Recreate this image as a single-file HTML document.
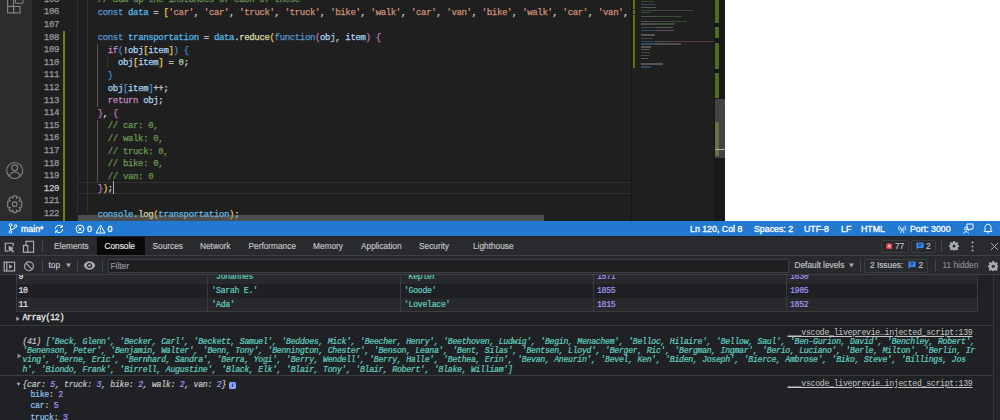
<!DOCTYPE html>
<html><head><meta charset="utf-8">
<style>
*{margin:0;padding:0;box-sizing:border-box}
html,body{width:1000px;height:420px;overflow:hidden;background:#202124;font-family:"Liberation Sans",sans-serif}
.abs{position:absolute}
#act{position:absolute;left:0;top:0;width:32px;height:220.8px;background:#2c2c2c}
#editor{position:absolute;left:32px;top:0;width:693px;height:220.8px;background:#1f1f1f;overflow:hidden}
#code{position:absolute;left:0;top:0;width:1000px;height:221px}
.cl{position:absolute;left:45.5px;height:12.6px;line-height:12.6px;font-family:"Liberation Mono",monospace;font-size:9px;letter-spacing:-0.35px;-webkit-text-stroke:0.25px;color:#d4d4d4;white-space:pre;width:554px;overflow:hidden}
.ln{position:absolute;left:0;width:27px;text-align:right;height:12.6px;line-height:12.6px;font-family:"Liberation Mono",monospace;font-size:9px;letter-spacing:-0.35px;-webkit-text-stroke:0.25px;color:#9a9a9a}
.ln.act{color:#c6c6c6}
.ig{position:absolute;width:1px;background:#303030}
.ig.act{background:#555555}
.mm{position:absolute;height:1.5px;opacity:.42}
#status{position:absolute;left:0;top:220.8px;width:1000px;height:15.7px;background:#2279d2;color:#fff;font-size:8.8px;line-height:15.5px}
#status span{position:absolute;top:1.2px;white-space:pre;-webkit-text-stroke:0.3px #fff}
#dev{position:absolute;left:0;top:236.5px;width:1000px;height:183.5px;background:#202124;overflow:hidden}
.tb{position:absolute;top:0;height:18.5px;line-height:18.5px;font-size:8.3px;color:#c4c7c5;white-space:pre;-webkit-text-stroke:0.15px}
.sep{position:absolute;width:1px;background:#45474b}
.mono{font-family:"Liberation Mono",monospace}
.tr{position:absolute;left:15.5px;width:962px;height:14px;}
.td{position:absolute;top:0.6px;height:14px;line-height:14px;font-family:"Liberation Mono",monospace;font-size:8.2px;letter-spacing:-0.29px;white-space:pre;-webkit-text-stroke:0.2px}
.str{color:#62cfc0}
.num{color:#a596f2}
.cm{position:absolute;left:0;font-family:"Liberation Mono",monospace;font-size:8.2px;letter-spacing:-0.29px;white-space:pre;color:#e3e3e3;-webkit-text-stroke:0.2px}
.link{position:absolute;left:787.5px;font-family:"Liberation Mono",monospace;font-size:8.2px;letter-spacing:-0.29px;white-space:pre;color:#c4c7c5;text-decoration:underline}
</style></head><body>
<div class="abs" style="left:700px;top:0;width:300px;height:221px;background:#fff"></div>
<div id="act">
  <svg class="abs" style="left:0;top:0" width="32" height="221" viewBox="0 0 32 221">
    <g fill="none" stroke="#858585" stroke-width="1.1">
      <rect x="7.6" y="-0.5" width="6" height="6.9"/>
      <rect x="7.6" y="6.4" width="6" height="6.5"/>
      <rect x="13.6" y="6.4" width="6.5" height="6.5"/>
      <rect x="15.5" y="-4" width="7.5" height="7.2" rx="1"/>
      <circle cx="14.7" cy="170.5" r="8"/>
      <circle cx="14.7" cy="167.8" r="2.9"/>
      <path d="M9.2 176.3 C10.5 172.8 12.5 172 14.7 172 C16.9 172 18.9 172.8 20.2 176.3"/>
      <circle cx="14.7" cy="204.2" r="2.3"/>
      <path d="M13.3 195.8 L16.1 195.8 L16.6 198.2 L18.6 196.9 L20.6 198.9 L19.3 200.9 L21.7 201.4 L21.7 204.2 L21.7 207 L19.3 207.5 L20.6 209.5 L18.6 211.5 L16.6 210.2 L16.1 212.6 L13.3 212.6 L12.8 210.2 L10.8 211.5 L8.8 209.5 L10.1 207.5 L7.7 207 L7.7 201.4 L10.1 200.9 L8.8 198.9 L10.8 196.9 L12.8 198.2 Z"/>
    </g>
  </svg>
</div>
<div id="editor">
  <div id="code">
<div class="ig" style="left:44.50px;top:-10px;height:223px"></div>
<div class="ig" style="left:54.60px;top:-10px;height:223px"></div>
<div class="ig act" style="left:64.70px;top:44.10px;height:63.00px"></div>
<div class="ig act" style="left:64.70px;top:119.70px;height:63.00px"></div>
<div class="ig" style="left:74.80px;top:56.70px;height:12.60px"></div>
    <!-- current line box -->
    <div class="abs" style="left:46px;top:182px;width:553px;height:11.5px;border-top:1px solid #303030;border-bottom:1px solid #303030"></div>
<div class="cl" style="top:-5.70px">    <span style="color:#6a9955">// Sum up the instances of each of these</span></div>
<div class="ln" style="top:-6.30px">105</div>
<div class="cl" style="top:6.90px">    <span style="color:#5a96cc">const</span> <span style="color:#56b8e8">data</span><span style="color:#d4d4d4"> = </span><span style="color:#e8c840">[</span><span style="color:#ce9178">&#x27;car&#x27;</span><span style="color:#d4d4d4">, </span><span style="color:#ce9178">&#x27;car&#x27;</span><span style="color:#d4d4d4">, </span><span style="color:#ce9178">&#x27;truck&#x27;</span><span style="color:#d4d4d4">, </span><span style="color:#ce9178">&#x27;truck&#x27;</span><span style="color:#d4d4d4">, </span><span style="color:#ce9178">&#x27;bike&#x27;</span><span style="color:#d4d4d4">, </span><span style="color:#ce9178">&#x27;walk&#x27;</span><span style="color:#d4d4d4">, </span><span style="color:#ce9178">&#x27;car&#x27;</span><span style="color:#d4d4d4">, </span><span style="color:#ce9178">&#x27;van&#x27;</span><span style="color:#d4d4d4">, </span><span style="color:#ce9178">&#x27;bike&#x27;</span><span style="color:#d4d4d4">, </span><span style="color:#ce9178">&#x27;walk&#x27;</span><span style="color:#d4d4d4">, </span><span style="color:#ce9178">&#x27;car&#x27;</span><span style="color:#d4d4d4">, </span><span style="color:#ce9178">&#x27;van&#x27;</span><span style="color:#d4d4d4">, </span><span style="color:#ce9178">&#x27;bike&#x27;</span><span style="color:#d4d4d4">, </span><span style="color:#ce9178">&#x27;walk&#x27;</span></div>
<div class="ln" style="top:6.30px">106</div>
<div class="cl" style="top:19.50px"></div>
<div class="ln" style="top:18.90px">107</div>
<div class="cl" style="top:32.10px">    <span style="color:#5a96cc">const</span> <span style="color:#56b8e8">transportation</span><span style="color:#d4d4d4"> = </span><span style="color:#56b8e8">data</span><span style="color:#d4d4d4">.</span><span style="color:#dcdcaa">reduce</span><span style="color:#e8c840">(</span><span style="color:#5a96cc">function</span><span style="color:#c874c4">(</span><span style="color:#a8d4f0">obj</span><span style="color:#d4d4d4">, </span><span style="color:#a8d4f0">item</span><span style="color:#c874c4">)</span> <span style="color:#c874c4">{</span></div>
<div class="ln" style="top:31.50px">108</div>
<div class="cl" style="top:44.70px">      <span style="color:#c586c0">if</span><span style="color:#3d8fd8">(</span><span style="color:#d4d4d4">!</span><span style="color:#a8d4f0">obj</span><span style="color:#e8c840">[</span><span style="color:#a8d4f0">item</span><span style="color:#e8c840">]</span><span style="color:#3d8fd8">)</span> <span style="color:#3d8fd8">{</span></div>
<div class="ln" style="top:44.10px">109</div>
<div class="cl" style="top:57.30px">        <span style="color:#a8d4f0">obj</span><span style="color:#e8c840">[</span><span style="color:#a8d4f0">item</span><span style="color:#e8c840">]</span><span style="color:#d4d4d4"> = </span><span style="color:#b5cea8">0</span><span style="color:#d4d4d4">;</span></div>
<div class="ln" style="top:56.70px">110</div>
<div class="cl" style="top:69.90px">      <span style="color:#3d8fd8">}</span></div>
<div class="ln" style="top:69.30px">111</div>
<div class="cl" style="top:82.50px">      <span style="color:#a8d4f0">obj</span><span style="color:#3d8fd8">[</span><span style="color:#a8d4f0">item</span><span style="color:#3d8fd8">]</span><span style="color:#d4d4d4">++;</span></div>
<div class="ln" style="top:81.90px">112</div>
<div class="cl" style="top:95.10px">      <span style="color:#c586c0">return</span> <span style="color:#a8d4f0">obj</span><span style="color:#d4d4d4">;</span></div>
<div class="ln" style="top:94.50px">113</div>
<div class="cl" style="top:107.70px">    <span style="color:#c874c4">}</span><span style="color:#d4d4d4">, </span><span style="color:#c874c4">{</span></div>
<div class="ln" style="top:107.10px">114</div>
<div class="cl" style="top:120.30px">      <span style="color:#6a9955">// car: 0,</span></div>
<div class="ln" style="top:119.70px">115</div>
<div class="cl" style="top:132.90px">      <span style="color:#6a9955">// walk: 0,</span></div>
<div class="ln" style="top:132.30px">116</div>
<div class="cl" style="top:145.50px">      <span style="color:#6a9955">// truck: 0,</span></div>
<div class="ln" style="top:144.90px">117</div>
<div class="cl" style="top:158.10px">      <span style="color:#6a9955">// bike: 0,</span></div>
<div class="ln" style="top:157.50px">118</div>
<div class="cl" style="top:170.70px">      <span style="color:#6a9955">// van: 0</span></div>
<div class="ln" style="top:170.10px">119</div>
<div class="cl" style="top:183.30px">    <span style="color:#c874c4">}</span><span style="color:#e8c840">)</span><span style="color:#d4d4d4">;</span></div>
<div class="ln act" style="top:182.70px">120</div>
<div class="cl" style="top:195.90px"></div>
<div class="ln" style="top:195.30px">121</div>
<div class="cl" style="top:208.50px">    <span style="color:#56b8e8">console</span><span style="color:#d4d4d4">.</span><span style="color:#dcdcaa">log</span><span style="color:#e8c840">(</span><span style="color:#56b8e8">transportation</span><span style="color:#e8c840">)</span><span style="color:#d4d4d4">;</span></div>
<div class="ln" style="top:207.90px">122</div>
    <div class="abs" style="left:81px;top:181.3px;width:1px;height:13px;background:#aeafad"></div>
    <!-- git gutter bar -->
    <div class="abs" style="left:31px;top:31px;width:2.4px;height:191px;background:#5e8a1c"></div>
    <!-- horizontal scrollbar -->
    <div class="abs" style="left:45.5px;top:215px;width:466.5px;height:5.8px;background:rgba(140,140,140,0.42)"></div>
  </div>
  <!-- minimap -->
  <div class="abs" style="left:599px;top:0;width:94px;height:221px;background:#1f1f1f;border-left:1px solid #151515"></div>
  <div class="abs" style="left:601px;top:0;width:2.2px;height:8.5px;background:#587c0c"></div><div class="abs" style="left:601px;top:9.8px;width:2.2px;height:4px;background:#587c0c"></div><div class="abs" style="left:601px;top:15px;width:2.2px;height:53px;background:#587c0c"></div>
  <div class="abs" style="left:682px;top:0;width:11px;height:221px;background:#181818"></div>
  <div class="abs" style="left:683px;top:0;width:3.6px;height:23px;background:#4f6e1c"></div>
  <div class="abs" style="left:683px;top:27px;width:3.6px;height:11px;background:#4f6e1c"></div>
  <div class="abs" style="left:683px;top:43px;width:3.6px;height:25.5px;background:#4f6e1c"></div>
  <div class="abs" style="left:683px;top:73px;width:3.6px;height:25px;background:#4f6e1c"></div>
  <div class="abs" style="left:683px;top:122px;width:3.6px;height:34px;background:#4f6e1c"></div>
  <div class="abs" style="left:682.5px;top:99px;width:10px;height:59px;background:rgba(121,121,121,0.45)"></div>
  <div class="abs" style="left:682.5px;top:149px;width:10px;height:1.2px;background:#b0b0b0"></div>
</div>
<div id="mmwrap" class="abs" style="left:0;top:0;width:715px;height:221px;overflow:hidden">
<div class="mm" style="left:640.50px;top:0.80px;width:13.00px;background:#5d8a50"></div>
<div class="mm" style="left:640.50px;top:3.80px;width:15.00px;background:#4a7fb8"></div>
<div class="mm" style="left:640.50px;top:6.60px;width:15.00px;background:#a0a0a0"></div>
<div class="mm" style="left:640.50px;top:9.80px;width:52.00px;background:#5d8a50"></div>
<div class="mm" style="left:640.50px;top:11.90px;width:10.00px;background:#5d8a50"></div>
<div class="mm" style="left:640.50px;top:15.60px;width:15.00px;background:#909090"></div>
<div class="mm" style="left:655.50px;top:15.60px;width:26.00px;background:#5d8a50"></div>
<div class="mm" style="left:640.50px;top:20.60px;width:12.00px;background:#909090"></div>
<div class="mm" style="left:652.50px;top:20.60px;width:34.00px;background:#5d8a50"></div>
<div class="mm" style="left:640.50px;top:23.00px;width:14.00px;background:#909090"></div>
<div class="mm" style="left:654.50px;top:23.00px;width:20.00px;background:#5d8a50"></div>
<div class="mm" style="left:640.50px;top:26.50px;width:14.00px;background:#4a7fb8"></div>
<div class="mm" style="left:654.50px;top:26.50px;width:18.00px;background:#a0a0a0"></div>
<div class="mm" style="left:640.50px;top:29.60px;width:15.00px;background:#4a7fb8"></div>
<div class="mm" style="left:655.50px;top:29.60px;width:18.00px;background:#a0a0a0"></div>
<div class="mm" style="left:640.50px;top:34.40px;width:14.00px;background:#a0a0a0"></div>
<div class="mm" style="left:640.50px;top:37.60px;width:12.00px;background:#5d8a50"></div>
<div class="mm" style="left:640.50px;top:40.60px;width:14.00px;background:#4a7fb8"></div>
<div class="mm" style="left:654.50px;top:40.60px;width:16.00px;background:#909090"></div>
<div class="mm" style="left:670.50px;top:40.60px;width:46.00px;background:#9a7060"></div>
<div class="mm" style="left:640.50px;top:43.40px;width:14.00px;background:#4a7fb8"></div>
<div class="mm" style="left:654.50px;top:43.40px;width:26.00px;background:#909090"></div>
<div class="mm" style="left:640.50px;top:46.20px;width:10.00px;background:#a0a0a0"></div>
<div class="mm" style="left:640.50px;top:48.80px;width:9.00px;background:#a0a0a0"></div>
<div class="mm" style="left:640.50px;top:51.80px;width:9.00px;background:#5d8a50"></div>
<div class="mm" style="left:640.50px;top:54.80px;width:9.00px;background:#5d8a50"></div>
<div class="mm" style="left:640.50px;top:57.80px;width:7.00px;background:#a0a0a0"></div>
<div class="mm" style="left:640.50px;top:63.20px;width:22.00px;background:#a0a0a0"></div>
<div class="mm" style="left:640.50px;top:66.20px;width:10.00px;background:#4a7fb8"></div>
</div>

<div id="status">
  <svg class="abs" style="left:8px;top:2.5px" width="10" height="11" viewBox="0 0 10 11"><g fill="none" stroke="#fff" stroke-width="1"><circle cx="2.5" cy="2" r="1.3"/><circle cx="2.5" cy="9" r="1.3"/><circle cx="7.5" cy="3" r="1.3"/><path d="M2.5 3.3 V7.7 M7.5 4.3 C7.5 6.5 2.5 5.5 2.5 7.7"/></g></svg>
  <span style="left:21px">main*</span>
  <svg class="abs" style="left:54px;top:3px" width="10" height="10" viewBox="0 0 10 10"><g fill="none" stroke="#fff" stroke-width="1"><path d="M1.3 5 A3.7 3.7 0 0 1 8 2.8"/><path d="M8.7 5 A3.7 3.7 0 0 1 2 7.2"/><path d="M8.3 1 V3.2 H6"/><path d="M1.7 9 V6.8 H4"/></g></svg>
  <svg class="abs" style="left:75px;top:3px" width="10" height="10" viewBox="0 0 10 10"><g fill="none" stroke="#fff" stroke-width="1"><circle cx="5" cy="5" r="4"/><path d="M3.3 3.3 L6.7 6.7 M6.7 3.3 L3.3 6.7"/></g></svg>
  <span style="left:87px">0</span>
  <svg class="abs" style="left:95px;top:3px" width="11" height="10" viewBox="0 0 11 10"><g fill="none" stroke="#fff" stroke-width="1"><path d="M5.5 1 L10 9 H1 Z"/><path d="M5.5 4 V6.3 M5.5 7.2 V8"/></g></svg>
  <span style="left:107.5px">0</span>
  <span style="left:690px">Ln 120, Col 8</span>
  <span style="left:754px">Spaces: 2</span>
  <span style="left:804px">UTF-8</span>
  <span style="left:841px">LF</span>
  <span style="left:861px">HTML</span>
  <svg class="abs" style="left:897.5px;top:3px" width="8.5" height="10" viewBox="0 0 10 10"><g fill="none" stroke="#fff" stroke-width="1"><path d="M2 1 C0.5 2.5 0.5 5.5 2 7 M8 1 C9.5 2.5 9.5 5.5 8 7 M3.5 2.5 C2.8 3.3 2.8 4.7 3.5 5.5 M6.5 2.5 C7.2 3.3 7.2 4.7 6.5 5.5"/><path d="M5 4 L3 10 M5 4 L7 10"/></g></svg>
  <span style="left:910px">Port: 3000</span>
  <svg class="abs" style="left:963px;top:2.5px" width="11" height="11" viewBox="0 0 11 11"><g fill="none" stroke="#fff" stroke-width="1"><path d="M4 1 H10 V6 H7 L5.5 7.5 V6 H4 Z"/><circle cx="3" cy="5.5" r="1.5"/><path d="M0.5 10.5 C0.8 8.2 5.2 8.2 5.5 10.5"/></g></svg>
  <svg class="abs" style="left:983px;top:2.5px" width="10" height="11" viewBox="0 0 10 11"><g fill="none" stroke="#fff" stroke-width="1"><path d="M2 7.5 V4.5 C2 2.5 3.3 1.2 5 1.2 C6.7 1.2 8 2.5 8 4.5 V7.5 L9 8.5 H1 Z"/><path d="M4 9.5 C4.3 10.3 5.7 10.3 6 9.5"/></g></svg>
</div>

<div id="dev">
  <!-- tab bar -->
  <div class="abs" style="left:0;top:0;width:1000px;height:18.5px;background:#292a2d"></div>
  <div class="abs" style="left:0;top:18px;width:1000px;height:1px;background:#3d3f42"></div>
  <div class="abs" style="left:0;top:19px;width:1000px;height:18.5px;background:#292a2d"></div>
  <svg class="abs" style="left:0;top:0" width="45" height="37" viewBox="0 0 45 37">
    <g fill="none" stroke="#aeb1b4" stroke-width="1.15">
      <path d="M5.3 14.2 V6.2 H13.2 V9.2"/>
      <path d="M5.3 14.2 H8.3" />
      <path d="M8.8 9.3 L9.3 14.6 L10.6 12.9 L12.9 15.3 L13.8 14.4 L11.5 12 L13.3 11 Z" fill="#aeb1b4" stroke-width="0.6"/>
      <rect x="26" y="4.3" width="7.6" height="10.9"/>
      <rect x="23.4" y="8.5" width="4.4" height="6.7" fill="#292a2d"/>
      <rect x="4.2" y="25.2" width="10.4" height="8.8"/>
      <path d="M6.8 25.2 V34"/>
      <path d="M9.2 27.2 L12.4 29.6 L9.2 32 Z" fill="#aeb1b4" stroke="none"/>
      <circle cx="29" cy="29.3" r="4.4"/>
      <path d="M25.9 26.2 L32.1 32.4"/>
    </g>
  </svg>
  <div class="sep" style="left:41.5px;top:3.5px;height:12px"></div>
  <div class="abs" style="left:97px;top:0;width:48px;height:18.5px;background:#0a0a0a"></div>
  <div class="tb" style="left:54px">Elements</div>
  <div class="tb" style="left:104.5px;color:#e8e8e8">Console</div>
  <div class="tb" style="left:152.5px">Sources</div>
  <div class="tb" style="left:200px">Network</div>
  <div class="tb" style="left:248.5px">Performance</div>
  <div class="tb" style="left:313px">Memory</div>
  <div class="tb" style="left:361px">Application</div>
  <div class="tb" style="left:419px">Security</div>
  <div class="tb" style="left:473px">Lighthouse</div>
  <!-- right badges -->
  <div class="abs" style="left:881px;top:3px;width:28px;height:13px;border:1px solid #3c3d40;border-radius:2px"></div>
  <svg class="abs" style="left:885.5px;top:6.3px" width="6.5" height="6.5" viewBox="0 0 6.5 6.5"><circle cx="3.25" cy="3.25" r="3.2" fill="#e5484d"/><path d="M2 2 L4.5 4.5 M4.5 2 L2 4.5" stroke="#fff" stroke-width="0.8"/></svg>
  <div class="tb" style="left:895px">77</div>
  <div class="abs" style="left:911px;top:3px;width:24.5px;height:13px;border:1px solid #3c3d40;border-radius:2px"></div>
  <svg class="abs" style="left:916px;top:5px" width="8" height="9" viewBox="0 0 8 9"><path d="M0.5 0.5 H7.5 V6 H2 L0.5 8 Z" fill="#3f8cf3"/><path d="M2 2.2 H6 M2 4 H5" stroke="#0b2a60" stroke-width="0.8"/></svg>
  <div class="tb" style="left:926px">2</div>
  <div class="sep" style="left:941px;top:3.5px;height:12px"></div>
  <svg class="abs" style="left:948.5px;top:4.5px" width="10" height="10" viewBox="0 0 12 12"><g fill="#a8abae"><path d="M5 0.5 H7 L7.3 2 L8.5 2.6 L9.8 1.7 L11.2 3.1 L10.3 4.4 L10.8 5.5 L12 5.8 V7.8 L10.8 8.1 L10.3 9.2 L11.2 10.5 L9.8 11.9 L8.5 11 L7.3 11.6 L7 12 H5 L4.7 11.6 L3.5 11 L2.2 11.9 L0.8 10.5 L1.7 9.2 L1.2 8.1 L0 7.8 V5.8 L1.2 5.5 L1.7 4.4 L0.8 3.1 L2.2 1.7 L3.5 2.6 L4.7 2 Z" transform="translate(0,-0.6)"/></g><circle cx="6" cy="6" r="1.8" fill="#292a2d"/></svg>
  <svg class="abs" style="left:970px;top:4px" width="5" height="11" viewBox="0 0 5 11"><g fill="#a8abae"><circle cx="2.5" cy="1.5" r="1"/><circle cx="2.5" cy="5.5" r="1"/><circle cx="2.5" cy="9.5" r="1"/></g></svg>
  <svg class="abs" style="left:989.5px;top:5.5px" width="9" height="9" viewBox="0 0 9 9"><path d="M1 1 L8 8 M8 1 L1 8" stroke="#a8abae" stroke-width="1"/></svg>

  <!-- toolbar -->
  <div class="abs" style="left:0;top:37.5px;width:1000px;height:1px;background:#3d3f42"></div>
  <div class="sep" style="left:41.5px;top:23px;height:11px"></div>
  <div class="tb" style="left:48.5px;top:20.5px;height:17.5px;line-height:17.5px">top</div>
  <svg class="abs" style="left:65.5px;top:26px" width="5" height="5" viewBox="0 0 5 5"><path d="M0 0.5 H5 L2.5 4.5 Z" fill="#a8abae"/></svg>
  <div class="sep" style="left:76.5px;top:23px;height:11px"></div>
  <svg class="abs" style="left:83px;top:24px" width="13" height="9" viewBox="0 0 13 9"><path d="M0.6 4.5 C2.5 1 4.5 0.3 6.5 0.3 C8.5 0.3 10.5 1 12.4 4.5 C10.5 8 8.5 8.7 6.5 8.7 C4.5 8.7 2.5 8 0.6 4.5 Z" fill="#a8abae"/><circle cx="6.5" cy="4.5" r="2.6" fill="#292a2d"/><circle cx="6.5" cy="4.5" r="1.2" fill="#a8abae"/></svg>
  <div class="sep" style="left:102px;top:23px;height:11px"></div>
  <div class="abs" style="left:107.5px;top:22px;width:681px;height:14px;background:#1f1f22;border:1px solid #3c3d40;border-radius:1px"></div>
  <div class="tb" style="left:110.5px;top:21.2px;height:17px;line-height:17px;color:#9aa0a6">Filter</div>
  <div class="tb" style="left:794.5px;top:20.5px;height:17.5px;line-height:17.5px">Default levels</div>
  <svg class="abs" style="left:849px;top:26px" width="5" height="5" viewBox="0 0 5 5"><path d="M0 0.5 H5 L2.5 4.5 Z" fill="#a8abae"/></svg>
  <div class="sep" style="left:860px;top:23px;height:11px"></div>
  <div class="abs" style="left:863.5px;top:22px;width:64.5px;height:14px;border:1px solid #3c3d40;border-radius:2px"></div>
  <div class="tb" style="left:870px;top:20.5px;height:17.5px;line-height:17.5px">2 Issues:</div>
  <svg class="abs" style="left:908px;top:24.5px" width="8" height="9" viewBox="0 0 8 9"><path d="M0.5 0.5 H7.5 V6 H2 L0.5 8 Z" fill="#3f8cf3"/><path d="M2 2.2 H6 M2 4 H5" stroke="#0b2a60" stroke-width="0.8"/></svg>
  <div class="tb" style="left:918.5px;top:20.5px;height:17.5px;line-height:17.5px">2</div>
  <div class="sep" style="left:935px;top:23px;height:11px"></div>
  <div class="tb" style="left:942.5px;top:20.5px;height:17.5px;line-height:17.5px;color:#8a8d91">11 hidden</div>
  <svg class="abs" style="left:987.5px;top:24px" width="10.5" height="10.5" viewBox="0 0 12 12"><g fill="#a8abae"><path d="M5 0.5 H7 L7.3 2 L8.5 2.6 L9.8 1.7 L11.2 3.1 L10.3 4.4 L10.8 5.5 L12 5.8 V7.8 L10.8 8.1 L10.3 9.2 L11.2 10.5 L9.8 11.9 L8.5 11 L7.3 11.6 L7 12 H5 L4.7 11.6 L3.5 11 L2.2 11.9 L0.8 10.5 L1.7 9.2 L1.2 8.1 L0 7.8 V5.8 L1.2 5.5 L1.7 4.4 L0.8 3.1 L2.2 1.7 L3.5 2.6 L4.7 2 Z" transform="translate(0,-0.6)"/></g><circle cx="6" cy="6" r="1.8" fill="#292a2d"/></svg>

  <!-- console content (offset top 38.5 => abs 275) -->
  <div class="abs" style="left:0;top:38.5px;width:1000px;height:146px;background:#202124;overflow:hidden">
    <!-- table rows -->
    <div class="tr" style="top:-6px;height:14.6px;background:#28292c;overflow:hidden">
      <div class="td" style="left:3px;color:#e3e3e3">9</div>
      <div class="td str" style="left:196px">'Johannes'</div>
      <div class="td str" style="left:388.5px">'Kepler'</div>
      <div class="td num" style="left:581.5px">1571</div>
      <div class="td num" style="left:774.5px">1630</div>
    </div>
    <div class="tr" style="top:8.6px;background:#1f2023">
      <div class="td" style="left:3px;color:#e3e3e3">10</div>
      <div class="td str" style="left:196px">'Sarah E.'</div>
      <div class="td str" style="left:388.5px">'Goode'</div>
      <div class="td num" style="left:581.5px">1855</div>
      <div class="td num" style="left:774.5px">1905</div>
    </div>
    <div class="tr" style="top:22.6px;height:14.3px;background:#28292c">
      <div class="td" style="left:3px;color:#e3e3e3">11</div>
      <div class="td str" style="left:196px">'Ada'</div>
      <div class="td str" style="left:388.5px">'Lovelace'</div>
      <div class="td num" style="left:581.5px">1815</div>
      <div class="td num" style="left:774.5px">1852</div>
    </div>
    <div class="abs" style="left:15.5px;top:-2px;width:962.5px;height:39px;border:1px solid #3a3b3e;border-top:none"></div>
    <div class="abs" style="left:207px;top:-2px;width:1px;height:38.5px;background:#3a3b3e"></div>
    <div class="abs" style="left:399.5px;top:-2px;width:1px;height:38.5px;background:#3a3b3e"></div>
    <div class="abs" style="left:593px;top:-2px;width:1px;height:38.5px;background:#3a3b3e"></div>
    <div class="abs" style="left:785.5px;top:-2px;width:1px;height:38.5px;background:#3a3b3e"></div>
    <svg class="abs" style="left:16px;top:40.5px" width="5" height="6" viewBox="0 0 5 6"><path d="M0.3 0.6 L3.6 2.8 L0.3 5 Z" fill="#a8abae"/></svg>
    <div class="cm" style="left:22.5px;top:38.25px;line-height:9.5px;-webkit-text-stroke:0.35px">Array(12)</div>
    <div class="abs" style="left:0;top:49.5px;width:993px;height:1px;background:#3a3b3e"></div>
    <div class="link" style="top:53px;line-height:9.5px">___vscode_livepreviе…injected_script:139</div>
    <svg class="abs" style="left:16.5px;top:78px" width="5" height="6" viewBox="0 0 5 6"><path d="M0.5 0.5 L4.5 3 L0.5 5.5 Z" fill="#8a8d91"/></svg>
    <div class="cm" style="left:22.5px;top:62px;line-height:9.2px;font-style:italic;color:#62cfc0"><span style="color:#c4c7c5">(41) </span>['Beck, Glenn', 'Becker, Carl', 'Beckett, Samuel', 'Beddoes, Mick', 'Beecher, Henry', 'Beethoven, Ludwig', 'Begin, Menachem', 'Belloc, Hilaire', 'Bellow, Saul', 'Ben-Gurion, David', 'Benchley, Robert',
'Benenson, Peter', 'Benjamin, Walter', 'Benn, Tony', 'Bennington, Chester', 'Benson, Leana', 'Bent, Silas', 'Bentsen, Lloyd', 'Berger, Ric', 'Bergman, Ingmar', 'Berio, Luciano', 'Berle, Milton', 'Berlin, Ir
ving', 'Berne, Eric', 'Bernhard, Sandra', 'Berra, Yogi', 'Berry, Wendell', 'Berry, Halle', 'Bethea, Erin', 'Bevan, Aneurin', 'Bevel, Ken', 'Biden, Joseph', 'Bierce, Ambrose', 'Biko, Steve', 'Billings, Jos
h', 'Biondo, Frank', 'Birrell, Augustine', 'Black, Elk', 'Blair, Tony', 'Blair, Robert', 'Blake, William']</div>
    <div class="abs" style="left:0;top:100px;width:993px;height:1px;background:#3a3b3e"></div>
    <div class="link" style="top:103.5px;line-height:9.5px">___vscode_livepreviе…injected_script:139</div>
    <svg class="abs" style="left:16px;top:107px" width="6" height="5" viewBox="0 0 6 5"><path d="M0.6 0.8 H4.4 L2.5 3.9 Z" fill="#a8abae"/></svg>
    <div class="cm" style="left:22.5px;top:105px;line-height:9.5px;font-style:italic;color:#c4c7c5">{car: <span class="num">5</span>, truck: <span class="num">3</span>, bike: <span class="num">2</span>, walk: <span class="num">2</span>, van: <span class="num">2</span>}</div>
    <div class="abs" style="left:229px;top:106.5px;width:7px;height:7px;background:#8c9eff;border-radius:1.5px;color:#202124;font-size:6px;line-height:7px;text-align:center;font-weight:bold">i</div>
    <div class="cm" style="left:30.5px;top:114px;line-height:11.25px;color:#c4c7c5"><span style="color:#8fc0ec">bike</span>: <span class="num">2</span>
<span style="color:#8fc0ec">car</span>: <span class="num">5</span>
<span style="color:#8fc0ec">truck</span>: <span class="num">3</span></div>
    <!-- scrollbar -->
    <div class="abs" style="left:993px;top:0;width:7px;height:146px;background:#232427;border-left:1.5px solid #37383b"></div>
  </div>
</div>
</body></html>
